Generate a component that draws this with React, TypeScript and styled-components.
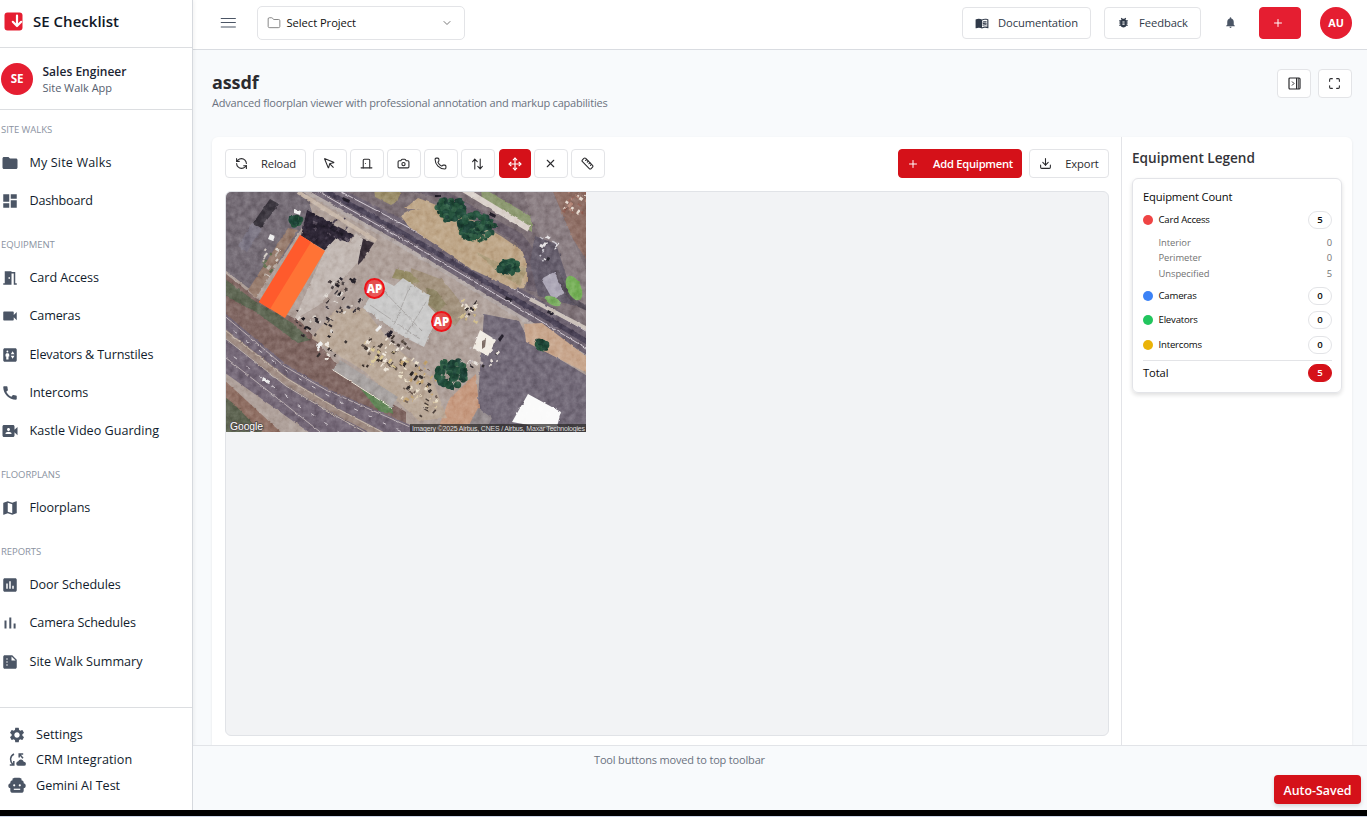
import React from 'react';
import styled, { createGlobalStyle, css } from 'styled-components';
import {
  MdFolder, MdDashboard, MdMeetingRoom, MdVideocam, MdElevator, MdCall, MdVideoCameraFront, MdMap,
  MdInsertChart, MdSummarize, MdSettings, MdMenuBook, MdBugReport, MdNotifications,
} from 'react-icons/md';
import {
  Folder, ChevronDown, Plus, RefreshCcw, MousePointer, DoorClosed, Camera, Phone, Move, X, Ruler,
  Download, Maximize,
} from 'lucide-react';

const Global = createGlobalStyle`
  * { box-sizing: border-box; }
  body { margin: 0; background: #f8fafc; font-family: "Open Sans", "Noto Sans", sans-serif; overflow: hidden; }
  svg { display: block; flex: none; }
`;

const Page = styled.div`
  height: 817px;
  display: flex;
  flex-direction: column;
`;
const Shell = styled.div`
  flex: 1;
  min-height: 0;
  display: flex;
`;
const Taskbar = styled.div`
  height: 7px;
  flex: none;
  background: #000;
  border-bottom: 1px solid #cdd6e8;
`;

const Label = styled.span<{ $s: number; $w?: number; $ls?: number; $c?: string; $lh?: number }>`
  display: block;
  font-size: ${p => p.$s}px;
  font-weight: ${p => p.$w ?? 400};
  letter-spacing: ${p => p.$ls ?? 0}px;
  color: ${p => p.$c ?? 'inherit'};
  line-height: ${p => p.$lh ?? 16}px;
  white-space: nowrap;
`;

/* Sidebar */
const Sidebar = styled.aside`
  width: 193px;
  flex: none;
  background: #fff;
  border-right: 1px solid #d6d9de;
  box-shadow: 1px 0 4px rgba(0, 0, 0, 0.06);
  display: flex;
  flex-direction: column;
  z-index: 1;
`;
const Brand = styled.div`
  height: 48px;
  padding: 0 0 5px 4px;
  display: flex;
  align-items: center;
  gap: 10px;
  border-bottom: 1px solid #dcdee1;
`;
const UserRow = styled.div`
  height: 62px;
  padding-left: 1px;
  display: flex;
  align-items: center;
  gap: 9.5px;
  border-bottom: 1px solid #dcdee1;
`;
const Avatar = styled.div`
  width: 32px;
  height: 32px;
  border-radius: 50%;
  background: #e51e31;
  color: #fff;
  display: flex;
  align-items: center;
  justify-content: center;
`;
const Stack = styled.div`
  display: flex;
  flex-direction: column;
`;
const UserText = styled(Stack)`
  padding-top: 2px;
`;
const Nav = styled.nav`
  flex: 1;
  padding-top: 11.6px;
`;
const Group = styled.section`
  margin-bottom: 16.8px;
`;
const GroupTitle = styled.div`
  height: 22px;
  padding-left: 1px;
`;
const NavItem = styled.div`
  height: 38.25px;
  padding-left: 1px;
  display: flex;
  align-items: center;
  gap: 10.5px;
  color: #111c2d;
  svg { color: #4b5565; }
`;
const SideFooter = styled.div`
  height: 103px;
  border-top: 1px solid #dcdee1;
  padding: 14px 0 0 8px;
`;
const FootItem = styled(NavItem)`
  height: 25.5px;
  padding-left: 0;
  gap: 10px;
`;

/* Main */
const Main = styled.main`
  flex: 1;
  min-width: 0;
  display: flex;
  flex-direction: column;
`;
const TopBar = styled.header`
  height: 50px;
  flex: none;
  background: #fff;
  border-bottom: 1px solid #d9dce1;
  padding: 0 15px 4px 27px;
  display: flex;
  align-items: center;
  color: #4b5565;
`;
const Select = styled.div`
  width: 208px;
  height: 34px;
  margin-left: 21px;
  padding: 0 11px 0 9px;
  border: 1px solid #e3e4e7;
  border-radius: 5px;
  display: flex;
  align-items: center;
  gap: 5.5px;
  color: #777;
  span { flex: 1; }
`;
const Button = styled.div<{ $w: number; $h?: number; $tone?: 'tool' | 'brand'; $gap?: number; $ml?: number; $pr?: number }>`
  width: ${p => p.$w}px;
  height: ${p => p.$h ?? 29}px;
  margin-left: ${p => p.$ml ?? 0}px;
  padding-right: ${p => p.$pr ?? 0}px;
  flex: none;
  border: 1px solid #e3e4e7;
  border-radius: 4px;
  background: #fff;
  color: #2b2b2e;
  display: flex;
  align-items: center;
  justify-content: center;
  gap: ${p => p.$gap ?? 0}px;
  ${p => p.$tone && css`
    background: ${p.$tone === 'tool' ? '#d51119' : '#e51e31'};
    border-color: ${p.$tone === 'tool' ? '#d51119' : '#e51e31'};
    color: #fff;
  `}
`;
const BellSlot = styled.div`
  width: 58px;
  display: flex;
  justify-content: center;
`;
const AccountSlot = styled.div`
  padding-left: 19px;
`;
const Spacer = styled.div`
  flex: 1;
`;
const TitleRow = styled.div`
  height: 87px;
  flex: none;
  padding: 19px 15px 0 19px;
  display: flex;
  gap: 7px;
`;
const Panel = styled.div`
  margin: 0 15px 0 19px;
  flex: 1;
  min-height: 0;
  display: flex;
  background: #fff;
  border-radius: 6px 6px 0 0;
  box-shadow: 0 1px 3px rgba(0, 0, 0, 0.08);
`;
const Work = styled.div`
  width: 910px;
  flex: none;
  border-right: 1px solid #e3e4e8;
  padding: 12px 12px 9px 13px;
  display: flex;
  flex-direction: column;
  gap: 13px;
`;
const Toolbar = styled.div`
  height: 29px;
  display: flex;
`;
const Canvas = styled.div`
  flex: 1;
  border: 1px solid #e1e3e7;
  border-radius: 6px;
  background: #f2f3f5;
  overflow: hidden;
  position: relative;
`;
const Marker = styled.div<{ $x: number; $y: number }>`
  position: absolute;
  left: ${p => p.$x}px;
  top: ${p => p.$y}px;
  width: 21px;
  height: 21px;
  border-radius: 50%;
  border: 2px solid #f01218;
  background: rgba(239, 60, 60, 0.8);
  color: #fff;
  display: flex;
  align-items: center;
  justify-content: center;
`;
const Legend = styled.div`
  flex: 1;
  padding: 13px 10px;
`;
const Card = styled.div`
  margin-top: 12px;
  height: 215px;
  border: 1px solid #e3e4e8;
  border-radius: 6px;
  padding: 8.8px 9px 0 10px;
  box-shadow: 0 2px 4px rgba(0, 0, 0, 0.13);
  color: #0a0a0a;
`;
const Line = styled.div<{ $h: number }>`
  height: ${p => p.$h}px;
  display: flex;
  align-items: center;
  justify-content: space-between;
`;
const CardTitle = styled(Line)`
  margin-bottom: 2.4px;
`;
const Sub = styled(Line)`
  padding-left: 15.5px;
  color: #737373;
`;
const SubList = styled.div`
  padding: 2.2px 0 2.3px;
`;
const Named = styled.div`
  display: flex;
  align-items: center;
  gap: 5.5px;
`;
const Dot = styled.i<{ $c: string }>`
  width: 10px;
  height: 10px;
  border-radius: 50%;
  background: ${p => p.$c};
`;
const Pill = styled.div<{ $on?: boolean }>`
  width: 24px;
  height: 18px;
  border-radius: 9px;
  border: 1px solid ${p => (p.$on ? '#d51119' : '#e3e4e7')};
  background: ${p => (p.$on ? '#d51119' : '#fff')};
  color: ${p => (p.$on ? '#fff' : '#0a0a0a')};
  display: flex;
  align-items: center;
  justify-content: center;
`;
const Total = styled(Line)`
  border-top: 1px solid #e3e4e7;
  margin-top: 3px;
`;
const BottomBar = styled.footer`
  height: 65px;
  flex: none;
  border-top: 1px solid #e2e4e8;
  background: #f8fafc;
  padding: 6px 6px 6px 0;
  display: flex;
  z-index: 1;
`;
const Hint = styled.div`
  flex: 1;
  padding-left: 401px;
`;
const Saved = styled.div`
  align-self: flex-end;
  width: 87px;
  height: 29px;
  padding-top: 2px;
  border-radius: 4px;
  background: #d51119;
  color: #fff;
  display: flex;
  align-items: center;
  justify-content: center;
  box-shadow: 0 2px 4px rgba(0, 0, 0, 0.15);
`;

type IconType = React.ComponentType<{ size?: number; strokeWidth?: number }>;

const Logo = () => (
  <svg width="19" height="19" viewBox="0 0 19 19">
    <rect x="0.5" y="0.5" width="18" height="18" rx="3" fill="#e51e31" />
    <path d="M13 3.5v10M8.8 9.8l4.2 4.2 4.2-4.2" fill="none" stroke="#fff" strokeWidth="2.2" strokeLinecap="round" strokeLinejoin="round" />
  </svg>
);
const Burger = () => (
  <svg width="16" height="16" viewBox="0 0 16 16" stroke="currentColor" strokeWidth="1.1">
    <path d="M.8 3.500h15M.8 7.500h15M.8 12h15" />
  </svg>
);
const Bars = () => (
  <svg width="18" height="18" viewBox="0 0 18 18" fill="currentColor">
    <path d="M3.500 6.500h2v8h-2zM8.300 3.500h2v11h-2zM12.600 9.500h2v5h-2z" />
  </svg>
);
const Robot = () => (
  <svg width="18" height="18" viewBox="0 0 18 18">
    <path d="M4.500 1.500h9v3h-9z" fill="currentColor" />
    <rect x="5" y=".8" width="8" height="4" rx="1.500" fill="currentColor" />
    <rect x="2.300" y="3.200" width="13.400" height="12.600" rx="2.600" fill="currentColor" />
    <rect x=".3" y="6.200" width="17.400" height="5" rx="2.500" fill="currentColor" />
    <circle cx="6.200" cy="8.300" r="1.100" fill="#fff" />
    <circle cx="11.800" cy="8.300" r="1.100" fill="#fff" />
    <path d="M5.800 12.300h6.400" stroke="#fff" strokeWidth="1.200" />
  </svg>
);
const SyncCloud = () => (
  <svg width="18" height="18" viewBox="0 0 18 18" fill="none" stroke="currentColor" strokeWidth="1.5">
    <path d="M6 3C1.800 5 1.500 10.200 5 13.400M1.800 14h4v-4M15.200 3h-4v3.600M11.500 3.300l3.500 4" />
    <path d="M10 14.800a2.300 2.300 0 0 1 .2-4.500 3 3 0 0 1 5.600.5 2 2 0 0 1 .2 4z" fill="currentColor" stroke="none" />
  </svg>
);
const UpDown = () => (
  <svg width="13" height="14" viewBox="0 0 24 24" fill="none" stroke="currentColor" strokeWidth="2" strokeLinecap="round" strokeLinejoin="round">
    <path d="M7 21V3M3 7.500 7 3l4.500 4.500M17 3v18M12.500 16.500 17 21l4-4.500" />
  </svg>
);
const PanelToggle = () => (
  <svg width="13" height="13" viewBox="0 0 13 13" fill="none" stroke="currentColor">
    <rect x="1" y="1" width="11" height="11" rx="1" strokeWidth="1.200" />
    <path d="M8.500 1v11M10.200 1v11M4 4.500l2 2-2 2" />
  </svg>
);

const groups: { title: string; items: [string, IconType, number][] }[] = [
  { title: 'SITE WALKS', items: [['My Site Walks', MdFolder, 0.14], ['Dashboard', MdDashboard, -0.2]] },
  {
    title: 'EQUIPMENT', items: [
      ['Card Access', MdMeetingRoom, -0.06], ['Cameras', MdVideocam, -0.15], ['Elevators & Turnstiles', MdElevator, -0.14],
      ['Intercoms', MdCall, -0.06], ['Kastle Video Guarding', MdVideoCameraFront, 0]],
  },
  { title: 'FLOORPLANS', items: [['Floorplans', MdMap, -0.08]] },
  {
    title: 'REPORTS', items: [
      ['Door Schedules', MdInsertChart, -0.06], ['Camera Schedules', Bars, -0.14], ['Site Walk Summary', MdSummarize, 0]],
  },
];

/* Aerial view */
let seed = 11;
const rnd = () => {
  seed = (seed * 16807) % 2147483647;
  return seed / 2147483647;
};
type Patch = [number, number, number, number, number, string[]];
const patches: Patch[] = [
  [70, 118, 35, 25, 26, ['#1d1a20', '#2c272d', '#d9d2cc', '#463c3c']],
  [96, 85, 36, 36, 30, ['#1d1a20', '#2b2730', '#463e40', '#ded8d2']],
  [132, 146, 50, 32, 55, ['#d9c690', '#3a302c', '#f0e8dc', '#5d5048']],
  [172, 168, 38, 42, 55, ['#2b2626', '#eadfc9', '#c2a36f', '#6b5a50']],
  [90, 145, 28, 22, 12, ['#efe9e2', '#312b2b', '#87776b']],
  [232, 108, 18, 22, 22, ['#cdb988', '#2c2627', '#e8ded0']],
  [35, 55, 16, 28, 16, ['#b7aba2', '#5b6b4c', '#d5cdc6']],
  [336, 0, 24, 24, 22, ['#e6dad0', '#8e5d52', '#b68a7c']],
  [311, 42, 20, 34, 14, ['#e5e2e4', '#2c2a33', '#c6c4cc']],
  [186, 206, 24, 18, 12, ['#d8c7a8', '#433833']],
  [240, 150, 30, 24, 16, ['#e8e2dc', '#2a2529', '#b8aeb0']],
  [85, 24, 38, 26, 20, ['#3d3546', '#1d1a26', '#514857']],
];
const specks = patches.flatMap(([x, y, w, h, n, cols]) =>
  Array.from({ length: n }, () => ({
    x: x + rnd() * w, y: y + rnd() * h, w: 1.5 + rnd() * 3.5, h: 1 + rnd() * 2.2, r: rnd() > 0.5 ? 32 : -50,
    c: cols[Math.floor(rnd() * cols.length)],
  })),
);
const leaves = [[225, 18, 14, 12], [251, 35, 18, 14], [226, 182, 15, 14], [283, 75, 11, 6], [316, 153, 5, 4], [70, 29, 5, 4]]
  .flatMap(([cx, cy, rx, ry]) => Array.from({ length: rx * 6 }, () => {
    const a = rnd() * 6.283, q = Math.sqrt(rnd());
    return { x: cx + Math.cos(a) * q * rx, y: cy + Math.sin(a) * q * ry, r: 1.5 + rnd() * 2.2, c: ['#1d4536', '#23503b', '#1a3d33', '#2d5b43'][Math.floor(rnd() * 4)] };
  }));

const Aerial = () => (
  <svg width="360" height="240" viewBox="0 0 360 240">
    <defs>
      <filter id="ground" x="0" y="0" width="100%" height="100%" colorInterpolationFilters="sRGB">
        <feTurbulence type="fractalNoise" baseFrequency="0.16" numOctaves="4" seed="4" result="n" />
        <feDisplacementMap in="SourceGraphic" in2="n" scale="2.5" xChannelSelector="R" yChannelSelector="G" result="d" />
        <feColorMatrix in="n" type="matrix" values="0.9 0 0 0 0.13  0.9 0 0 0 0.12  0.9 0 0 0 0.11  0 0 0 0 0.5" result="g" />
        <feBlend in="g" in2="d" mode="soft-light" />
        <feGaussianBlur stdDeviation="0.45" />
      </filter>
    </defs>
    <g filter="url(#ground)">
      <path d="M-9-9h380v260H-9z" fill="#ac9e98" />
      <path d="M-5-5H78l8 25-16 25L45 82 30 102-5 75z" fill="#716973" />
      <path d="M72 38 30 106l-8-8 40-62z" fill="#93786a" />
      <path d="M-5 78 30 106l45 24 35 42 40 30 30 18v25H140L60 172-5 130z" fill="#7d6460" />
      <path d="M-5 84 30 110l38 22 16 16-12 3L30 120-5 102z" fill="#5a6350" />
      <path d="M-5 185 60 245H-5z" fill="#8d6d62" />
      <path d="M-5 202 8 212 40 245H-5z" fill="#59604e" />
      {/* lower divided highway */}
      <path d="M-5 118 60 172l40 24 82 36 30 13H90L64 227-5 178z" fill="#706474" />
      <path d="M-5 138 60 189l50 30 50 26" fill="none" stroke="#9b8880" strokeWidth="7" />
      <path d="M-5 121 58 174l42 24 84 37M-5 162 60 213l38 30" fill="none" stroke="#b8adb0" strokeWidth="1" />
      <path d="M-5 135 60 186l50 30 50 26M-5 143 60 194l50 30 45 25" fill="none" stroke="#c5b9ae" strokeWidth=".9" />
      <path d="M-5 129 60 179l48 28 70 34M-5 155 65 208l55 37" fill="none" stroke="#ddd6da" strokeWidth=".9" strokeDasharray="4 12" />
      {/* upper highway */}
      <path d="M112-5H365V140L180 31z" fill="#796d73" />
      <path d="M112-5 180 29 365 138v30L180 54 68-5z" fill="#6b6170" />
      <path d="M72-5 178 55 365 168" fill="none" stroke="#b2a8a6" strokeWidth="4" />
      <path d="M92-5 180 43 365 152" fill="none" stroke="#463f53" strokeWidth="5" />
      <path d="M106-5 180 34 365 142M84-5 180 49 365 159" fill="none" stroke="#cfc7cf" strokeWidth="1" />
      <path d="M72 0 150 49" stroke="#c5b5a8" strokeWidth="4" />
      <path d="M148-3h27q-1 12-10 16l-16-8z" fill="#9a8d69" />
      <path d="M178 17 192 6l47 18 36 20 23 16 6 22-6 14-10 1-43-20-44-30-18-12-8-11q5-8 25-7z" fill="#bca486" />
      <path d="m250 60 30 14 22 2-8 18-20-12z" fill="#9d9370" opacity=".6" />
      <path d="M180-5q25 0 50 15l50 29q32 12 25 60" fill="none" stroke="#655a66" strokeWidth="10" />
      <path d="M255-5 306 25v15l-50-28z" fill="#8b9870" />
      <path d="M237-3 303 37" stroke="#d9d0ca" strokeWidth="6" />
      <path d="M297-5h28l36 85v50L326 68 304 24z" fill="#877b80" />
      <path d="M325-5h40v80l-18-28z" fill="#8c6c63" />
      <path d="M309 44 330 52l20 62-38-10-8-34z" fill="#615a69" />
      <path d="m315 87 15-8 12 20-15 9z" fill="#aaa5b5" />
      <path d="M331 78q10 34 34 39" fill="none" stroke="#544d59" strokeWidth="5" />
      <ellipse cx="348" cy="96" rx="7" ry="13" transform="rotate(-25 348 96)" fill="#72ad55" />
      <ellipse cx="327" cy="109" rx="9" ry="4" transform="rotate(25 327 109)" fill="#7bae62" />
      <path d="M304 107 365 139" stroke="#c9bfb8" strokeWidth="4" />
      {/* yards */}
      <path d="m258 122 35 7 10 20 62 37v60H250l3-55z" fill="#6f6776" />
      <path d="m298 132 18-1 49 37v15l-65-33z" fill="#c6a48b" />
      <path d="m210 242 14-36 26-24 3 34-13 29z" fill="#c4977d" />
      <path d="m138 116 28 36 40 34 15 40-28 3-55-50-53-33 24-28z" fill="#bba997" opacity=".8" />
      <path d="m185 76 32 12 24 30-12 16-42-28z" fill="#a0907c" />
      <path d="m166 86 4-9 14 3 10 10-9 2-8-4z" fill="#938a64" />
      <path d="m200 96 10 2 10 14-8 8-10-8z" fill="#8b8263" />
      <path d="m81 18 47 25-11 14-12 5-30-18z" fill="#282231" />
      <path d="m133 45 15 6-12 18-4 4z" fill="#342b34" />
      <path d="m99 58 11-12 14 5 6-10 7 6-5 23-39 43-25 15z" fill="#c0b6b1" />
      <path d="m44 7 9 5-18 24-8-5z" fill="#38343d" />
      <path d="m26 31 10 6-15 23-9-6z" fill="#777281" />
      <path d="m137 116 18-29 13 7 9-8 27 18-2 9 10 11-14 31-20-10z" fill="#c8c8c8" />
      <path d="m144 113 50 34M153 94l43 45M184 94l-16 39M200 110l-20 32" stroke="#a3a1a0" strokeWidth=".8" />
      <path d="m134 196 32 18 1 8-14-2z" fill="#5d8254" />
      {specks.map((s, i) => (
        <rect key={i} x={s.x} y={s.y} width={s.w} height={s.h} fill={s.c} transform={`rotate(${s.r} ${s.x} ${s.y})`} />
      ))}
      {leaves.map((l, i) => <circle key={i} cx={l.x} cy={l.y} r={l.r} fill={l.c} />)}
      <path d="m114 168 58 37-6 10-59-37z" fill="#a5a09f" />
      <path d="m107 178 59 38" stroke="#eee7dc" strokeWidth="1" />
      <path d="m254 138 16 10-8 16-15-8z" fill="#f1ece4" />
      <path d="m256 149 4-2-1 8-3 2z" fill="#7d6d66" />
      <path d="m302 202 33 18-5 18-44-8z" fill="#fafafa" />
      <path d="m252 216 14 10-6 12-18-3z" fill="#91898c" />
      <g fill="#211d29">
        <path d="m117 5 7 3-1 3-7-3zM280 104l6 3-1 3-6-3zM322 118l6 3-1 2-6-2zM264 20l6 3-1 3-6-3zM208 3h7v2h-7zM160 142l5-5 2 3-5 6zM272 147l4-5 2 2-4 6z" />
      </g>
      <g fill="#eee">
        <path d="m37 185 7 4-1 3-7-3zM149 138l5-5 2 2-5 5zM90 153l5-4 2 3-5 6zM44 42l5 2-2 5-5-2zM68 17l7 2-1 4-6-2z" />
      </g>
    </g>
    <path d="m74 43 25 16-40 67-26-16z" fill="#ff7335" />
    <path d="M74 43 85 50 44 117 33 110z" fill="#ff5a2c" />
    <rect x="184" y="232" width="176" height="8" fill="#282725" fillOpacity=".7" />
    <text x="186" y="238.500" fontFamily="Liberation Sans" fontSize="7" fill="#dedede" textLength="173">Imagery ©2025 Airbus, CNES / Airbus, Maxar Technologies</text>
    <text x="4" y="237.500" fontFamily="Liberation Sans" fontSize="10.500" fill="#fff" stroke="#514a4a" strokeWidth="1.600" paintOrder="stroke" textLength="33">Google</text>
  </svg>
);

const Count = ({ name, color, n }: { name: string; color: string; n: number }) => (
  <Line $h={24.4}>
    <Named><Dot $c={color} /><Label $s={9.6} $w={500} $ls={-0.2}>{name}</Label></Named>
    <Pill><Label $s={9.6} $w={600}>{n}</Label></Pill>
  </Line>
);

const tools: IconType[] = [MousePointer, DoorClosed, Camera, Phone, UpDown, Move, X, Ruler];

export default function App() {
  return (
    <Page>
      <Global />
      <Shell>
        <Sidebar>
          <Brand><Logo /><Label $s={15} $w={600} $ls={0.02} $c="#111827">SE Checklist</Label></Brand>
          <UserRow>
            <Avatar><Label $s={11.6} $w={700} $ls={-0.2}>SE</Label></Avatar>
            <UserText>
              <Label $s={12} $w={600} $ls={0.02} $c="#1b2432">Sales Engineer</Label>
              <Label $s={11} $ls={-0.03} $c="#56606e">Site Walk App</Label>
            </UserText>
          </UserRow>
          <Nav>
            {groups.map(g => (
              <Group key={g.title}>
                <GroupTitle><Label $s={9.5} $w={500} $ls={-0.05} $c="#8b93a1">{g.title}</Label></GroupTitle>
                {g.items.map(([t, Icon, ls]) => (
                  <NavItem key={t}><Icon size={18} /><Label $s={12.6} $w={500} $ls={ls}>{t}</Label></NavItem>
                ))}
              </Group>
            ))}
          </Nav>
          <SideFooter>
            <FootItem><MdSettings size={18} /><Label $s={12.6} $w={500}>Settings</Label></FootItem>
            <FootItem><SyncCloud /><Label $s={12.6} $w={500} $ls={0.08}>CRM Integration</Label></FootItem>
            <FootItem><Robot /><Label $s={12.6} $w={500} $ls={-0.03}>Gemini AI Test</Label></FootItem>
          </SideFooter>
        </Sidebar>
        <Main>
          <TopBar>
            <Burger />
            <Select>
              <Folder size={14} strokeWidth={1.5} />
              <Label $s={11.2} $w={500} $ls={-0.05} $c="#111">Select Project</Label>
              <ChevronDown size={12} />
            </Select>
            <Spacer />
            <Button $w={129} $h={32} $gap={9}><MdMenuBook size={14} color="#303a49" /><Label $s={11.2} $w={500} $ls={-0.1} $c="#303a49">Documentation</Label></Button>
            <Button $w={97} $h={32} $gap={9} $ml={13}><MdBugReport size={13} color="#303a49" /><Label $s={11.2} $w={500} $ls={-0.08} $c="#303a49">Feedback</Label></Button>
            <BellSlot><MdNotifications size={13} /></BellSlot>
            <Button $w={42} $h={32} $tone="brand" $pr={4}><Plus size={12} /></Button>
            <AccountSlot><Avatar><Label $s={10.8} $w={700}>AU</Label></Avatar></AccountSlot>
          </TopBar>
          <TitleRow>
            <Stack>
              <Label $s={18} $w={700} $ls={-0.1} $c="#2b2b2f" $lh={26}>assdf</Label>
              <Label $s={11} $ls={-0.21} $c="#6b7280">Advanced floorplan viewer with professional annotation and markup capabilities</Label>
            </Stack>
            <Spacer />
            <Button $w={34}><PanelToggle /></Button>
            <Button $w={34} $pr={1}><Maximize size={13} /></Button>
          </TitleRow>
          <Panel>
            <Work>
              <Toolbar>
                <Button $w={81} $gap={13}><RefreshCcw size={13} /><Label $s={11.2} $w={500} $ls={-0.1}>Reload</Label></Button>
                {tools.map((Icon, i) => (
                  <Button key={i} $w={i === 5 ? 32 : 34} $ml={i === 0 ? 7 : i === 5 ? 4 : 3} $pr={1} $tone={i === 5 ? 'tool' : undefined}><Icon size={i === 5 ? 14 : 13} /></Button>
                ))}
                <Spacer />
                <Button $w={124} $gap={14} $tone="tool"><Plus size={12} /><Label $s={11.2} $w={600} $ls={-0.26}>Add Equipment</Label></Button>
                <Button $w={80} $gap={13} $ml={7}><Download size={13} /><Label $s={11.2} $w={500} $ls={-0.12}>Export</Label></Button>
              </Toolbar>
              <Canvas>
                <Aerial />
                <Marker $x={138} $y={86}><Label $s={11.4} $w={800}>AP</Label></Marker>
                <Marker $x={205} $y={119}><Label $s={11.4} $w={800}>AP</Label></Marker>
              </Canvas>
            </Work>
            <Legend>
              <Label $s={13.6} $w={600} $c="#333338">Equipment Legend</Label>
              <Card>
                <CardTitle $h={18}><Label $s={11.2} $w={500} $ls={-0.15}>Equipment Count</Label></CardTitle>
                <Count name="Card Access" color="#ef4444" n={5} />
                <SubList>
                  {[['Interior', 0], ['Perimeter', 0], ['Unspecified', 5]].map(([t, n]) => (
                    <Sub $h={15.6} key={t}><Label $s={9.4} $ls={-0.05}>{t}</Label><Label $s={9.4}>{n}</Label></Sub>
                  ))}
                </SubList>
                <Count name="Cameras" color="#3b82f6" n={0} />
                <Count name="Elevators" color="#22c55e" n={0} />
                <Count name="Intercoms" color="#eab308" n={0} />
                <Total $h={24.6}><Label $s={11.2} $w={500} $ls={-0.1}>Total</Label><Pill $on><Label $s={9.6} $w={600}>5</Label></Pill></Total>
              </Card>
            </Legend>
          </Panel>
          <BottomBar>
            <Hint><Label $s={11} $ls={-0.17} $c="#6b7280">Tool buttons moved to top toolbar</Label></Hint>
            <Saved><Label $s={12.4} $w={600}>Auto-Saved</Label></Saved>
          </BottomBar>
        </Main>
      </Shell>
      <Taskbar />
    </Page>
  );
}
